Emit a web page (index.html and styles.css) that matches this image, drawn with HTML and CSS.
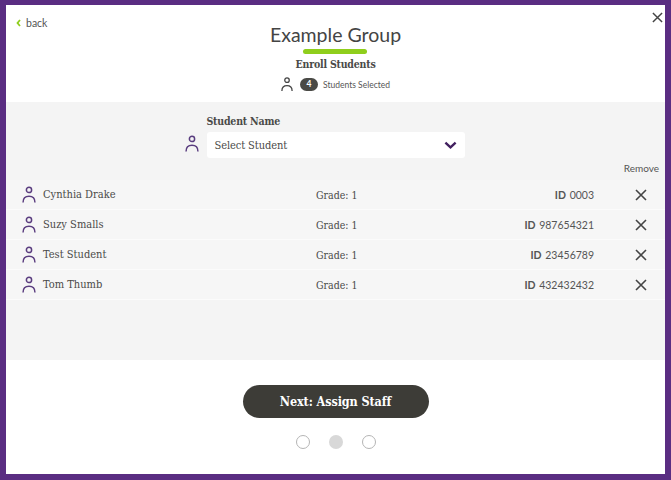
FILE: index.html
```html
<!DOCTYPE html>
<html lang="en">
<head>
    <meta charset="UTF-8">
    <title>Enroll Students</title>
    <link rel="stylesheet" href="styles.css">
</head>
<body>
<svg class="defs" width="0" height="0">
    <symbol id="person" viewBox="0 0 16 20">
        <circle cx="8" cy="4.2" r="3" fill="none" stroke="currentColor" stroke-width="1.7"/>
        <path d="M1.2 18.5c0-4.6 2.8-7 6.8-7s6.8 2.4 6.8 7" fill="none" stroke="currentColor" stroke-width="1.7"/>
    </symbol>
    <symbol id="cross" viewBox="0 0 12 12">
        <path d="M1 1l10 10M11 1L1 11" fill="none" stroke="currentColor" stroke-width="1.6"/>
    </symbol>
</svg>
<div class="frame">
    <!-- Header -->
    <div class="head">
        <a class="back">
            <svg class="back-arrow" viewBox="0 0 5 8"><path d="M4 1L1.500 4 4 7" fill="none" stroke="currentColor" stroke-width="1.800"/></svg>
            back
        </a>
        <div class="head-center">
            <h1>Example Group</h1>
            <div class="underline"></div>
            <h2>Enroll Students</h2>
            <div class="selected">
                <svg class="icon-small"><use href="#person"/></svg>
                <span class="badge">4</span>
                <span>Students Selected</span>
            </div>
        </div>
        <svg class="close"><use href="#cross"/></svg>
    </div>

    <!-- Student picker and list -->
    <div class="panel">
        <div class="picker">
            <svg class="icon purple"><use href="#person"/></svg>
            <div>
                <label>Student Name</label>
                <div class="select">
                    <span>Select Student</span>
                    <svg class="chevron" viewBox="0 0 14 9"><path d="M1.5 1.5L7 6.5l5.500-5" fill="none" stroke="currentColor" stroke-width="2.600"/></svg>
                </div>
            </div>
        </div>
        <div class="remove-label">Remove</div>
        <div class="row">
            <svg class="icon purple"><use href="#person"/></svg>
            <span class="name">Cynthia Drake</span>
            <span class="grade">Grade: 1</span>
            <span class="id"><b>ID</b> 0003</span>
            <svg class="remove"><use href="#cross"/></svg>
        </div>
        <div class="row">
            <svg class="icon purple"><use href="#person"/></svg>
            <span class="name">Suzy Smalls</span>
            <span class="grade">Grade: 1</span>
            <span class="id"><b>ID</b> 987654321</span>
            <svg class="remove"><use href="#cross"/></svg>
        </div>
        <div class="row">
            <svg class="icon purple"><use href="#person"/></svg>
            <span class="name">Test Student</span>
            <span class="grade">Grade: 1</span>
            <span class="id"><b>ID</b> 23456789</span>
            <svg class="remove"><use href="#cross"/></svg>
        </div>
        <div class="row">
            <svg class="icon purple"><use href="#person"/></svg>
            <span class="name">Tom Thumb</span>
            <span class="grade">Grade: 1</span>
            <span class="id"><b>ID</b> 432432432</span>
            <svg class="remove"><use href="#cross"/></svg>
        </div>
    </div>

    <!-- Footer -->
    <div class="foot">
        <button class="next">Next: Assign Staff</button>
        <div class="dots">
            <span class="dot"></span>
            <span class="dot active"></span>
            <span class="dot"></span>
        </div>
    </div>
</div>
</body>
</html>
```

FILE: styles.css
```css
* {
    margin: 0;
    padding: 0;
    box-sizing: border-box;
}

body {
    width: 671px;
    height: 480px;
    overflow: hidden;
    font-family: 'DejaVu Serif Condensed', 'DejaVu Serif', serif;
    color: #4a4a48;
}

.defs {
    display: block;
    height: 0;
}

.frame {
    width: 671px;
    height: 480px;
    display: flex;
    flex-direction: column;
    background: #fff;
    border: solid #5a2d82;
    border-width: 5px 6px 6px 6px;
}

/* Header */
.head {
    height: 97px;
    flex: none;
    display: grid;
    grid-template-columns: 1fr auto 1fr;
}

.back {
    display: flex;
    align-items: center;
    align-self: start;
    gap: 5px;
    padding: 12px 0 0 10px;
    font: 10.500px 'Lato', sans-serif;
    color: #555;
}

.back-arrow {
    width: 5px;
    height: 8px;
    color: #8fce1c;
}

.head-center {
    display: flex;
    flex-direction: column;
    align-items: center;
}

h1 {
    margin-top: 18px;
    font: 400 19.500px/24px 'Lato', sans-serif;
    color: #444;
}

.underline {
    width: 64px;
    height: 5px;
    margin-top: 2px;
    border-radius: 3px;
    background: #8fce1c;
}

h2 {
    margin-top: 3px;
    font-size: 10.500px;
    line-height: 15px;
    font-weight: 700;
    letter-spacing: -0.2px;
    color: #4a4a48;
}

.selected {
    display: flex;
    align-items: center;
    margin-top: 5px;
    font: 8.500px 'Lato', sans-serif;
    color: #555;
}

.icon-small {
    width: 12px;
    height: 15px;
    margin-right: 7px;
    color: #444;
}

.badge {
    width: 18px;
    height: 13px;
    margin-right: 5px;
    border-radius: 7px;
    background: #4a4a46;
    color: #fff;
    font-weight: 700;
    line-height: 13px;
    text-align: center;
}

.close {
    justify-self: end;
    width: 11px;
    height: 11px;
    margin: 7px 2px 0 0;
    color: #444;
}

/* Picker and list */
.panel {
    height: 258px;
    flex: none;
    background: #f4f4f4;
}

.picker {
    display: flex;
    align-items: flex-end;
    justify-content: center;
    gap: 7px;
    padding: 12px 0 0 0;
    margin-left: -23px;
}

.picker .icon {
    margin: 0 1px 5px;
}

label {
    display: block;
    margin-bottom: 3px;
    font-size: 10.500px;
    line-height: 15px;
    font-weight: 700;
    letter-spacing: -0.2px;
}

.select {
    width: 258px;
    height: 26px;
    display: flex;
    align-items: center;
    justify-content: space-between;
    padding: 0 8px;
    border-radius: 3px;
    background: #fff;
    font-size: 11px;
    letter-spacing: -0.1px;
}

.chevron {
    width: 13px;
    height: 9px;
    color: #42205f;
}

.remove-label {
    padding: 3px 6px 0 0;
    height: 22px;
    text-align: right;
    font: 10px/14px 'Lato', sans-serif;
    color: #555;
}

.row {
    height: 30px;
    display: grid;
    grid-template-columns: 16px 273px 150px 1fr 71px;
    align-items: center;
    padding-left: 15px;
    background: #f6f6f6;
    border-bottom: 1px solid #fbfbfb;
    font-size: 11px;
}

.icon {
    width: 14px;
    height: 18px;
}

.row .icon {
    justify-self: center;
}

.purple {
    color: #5a3d7f;
}

.name {
    padding-left: 6px;
}

.grade {
    padding-left: 6px;
    font-size: 10.500px;
}

.id {
    text-align: right;
    font-family: 'Lato', sans-serif;
    font-size: 10.500px;
    color: #555;
}

.id b {
    margin-right: 1px;
}

.remove {
    justify-self: end;
    width: 12px;
    height: 12px;
    margin-right: 18px;
    color: #444;
}

/* Footer */
.foot {
    flex: 1;
    display: flex;
    flex-direction: column;
    align-items: center;
    padding-top: 25px;
}

.next {
    width: 186px;
    height: 33px;
    border: none;
    border-radius: 17px;
    background: #3d3c37;
    color: #fff;
    font-family: 'DejaVu Serif Condensed', 'DejaVu Serif', serif;
    font-size: 12.500px;
    font-weight: 700;
    letter-spacing: -0.1px;
}

.dots {
    display: flex;
    gap: 19px;
    margin-top: 17px;
}

.dot {
    width: 14px;
    height: 14px;
    border: 1px solid #b5b5b5;
    border-radius: 50%;
}

.dot.active {
    border: none;
    background: #d8d8d8;
}
```
